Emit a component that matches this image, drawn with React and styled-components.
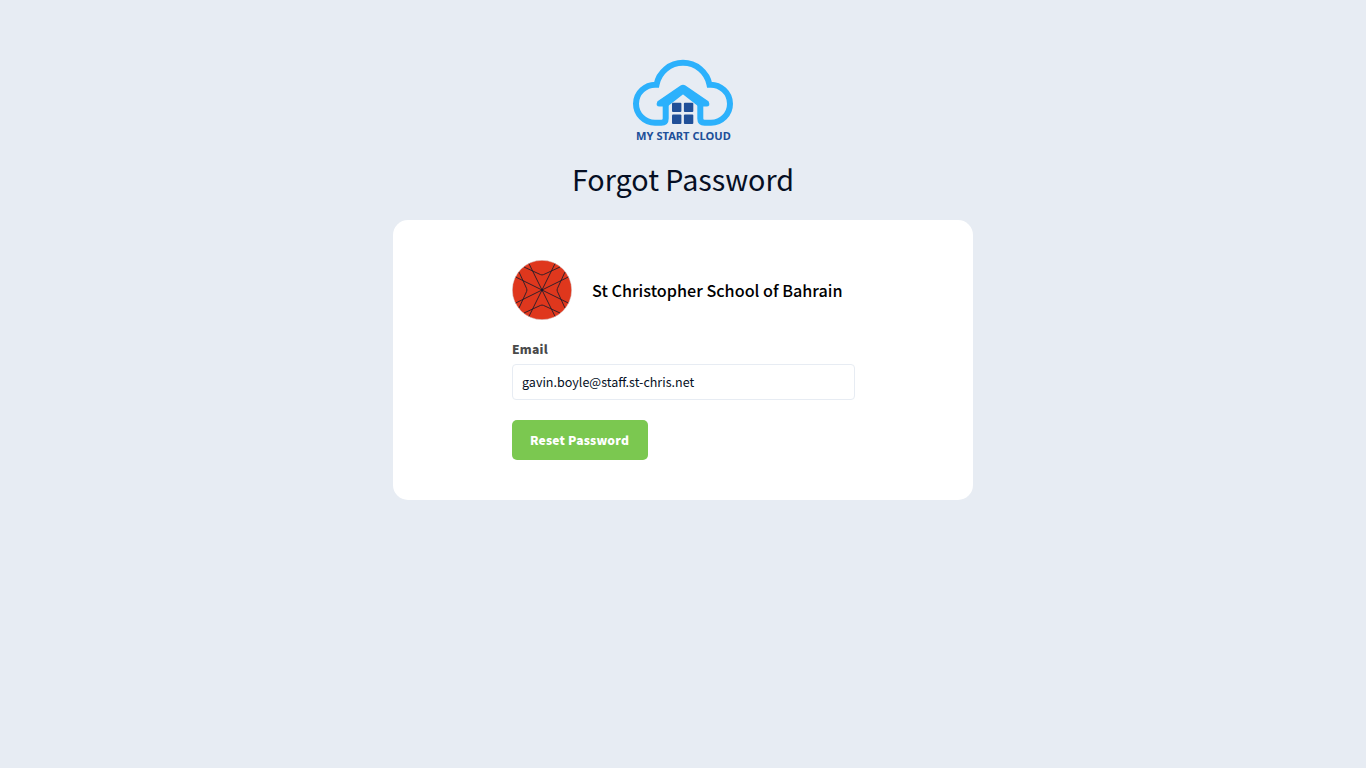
import React from 'react';
import styled, { createGlobalStyle } from 'styled-components';

const GlobalStyle = createGlobalStyle`
  *, *::before, *::after { box-sizing: border-box; }
  body {
    margin: 0;
    background: #e7ecf3;
    color: #050f24;
    font-family: "Noto Sans CJK SC", "Noto Sans", sans-serif;
  }
`;

const Page = styled.main`
  min-height: 100vh;
  padding-top: 60px;
  display: flex;
  flex-direction: column;
  align-items: center;
`;

const BrandLogo = styled.svg`
  display: block;
  width: 100px;
  height: 81px;
  overflow: visible;
`;

const Title = styled.h1`
  margin: 13px 0 16px;
  font-size: 28.7px;
  font-weight: 400;
  line-height: 50px;
  white-space: nowrap;
`;

const Card = styled.section`
  width: 580px;
  height: 280px;
  padding: 40px 118px 40px 119px;
  border-radius: 15px;
  background: #fff;
`;

const School = styled.header`
  display: flex;
  align-items: center;
  gap: 20px;
  height: 60px;
`;

const SchoolLogo = styled.svg`
  width: 60px;
  height: 60px;
  flex: none;
`;

const SchoolName = styled.h2`
  margin: 0;
  font-size: 16.2px;
  font-weight: 500;
  line-height: 24px;
  color: #000;
  white-space: nowrap;
`;

const Form = styled.form`
  display: flex;
  flex-direction: column;
  align-items: flex-start;
`;

const Label = styled.label`
  margin-top: 19px;
  font-size: 12.1px;
  letter-spacing: 0.24px;
  font-weight: 900;
  line-height: 20px;
  color: #4a4a4a;
`;

const EmailInput = styled.input`
  width: 343px;
  height: 36px;
  margin-top: 5px;
  padding: 0 9px 2px;
  border: 1px solid #e7ecf3;
  border-radius: 4px;
  background: #fff;
  color: #050f24;
  font: 400 12.54px "Noto Sans CJK SC", "Noto Sans", sans-serif;
  outline: none;
`;

const Button = styled.button`
  width: 136px;
  height: 40px;
  margin-top: 20px;
  padding: 0 1px 1px 0;
  border: 0;
  border-radius: 5px;
  background: #7bc850;
  color: #fff;
  font: 900 12.1px "Noto Sans CJK SC", "Noto Sans", sans-serif;
  letter-spacing: 0.2px;
`;

export default function App() {
  return (
    <Page>
      <GlobalStyle />
      <BrandLogo viewBox="0 0 100 81" role="img" aria-label="My Start Cloud">
        <path
          d="M32.7 44V58.5Q32.7 62.8 28.4 62.8H22A19.1 19.1 0 0 1 3 43.7A19.4 19.1 0 0 1 23.5 24.7A27 27 0 0 1 76.5 24.7A19.4 19.1 0 0 1 97 43.7A19.1 19.1 0 0 1 78 62.8H71.6Q67.3 62.8 67.3 58.5V44"
          fill="none" stroke="#2cb1fc" strokeWidth="6"
        />
        <path
          d="M25 42L48 26.1Q50 24.8 52 26.1L75 42Q76.7 45.8 73.5 45.8H66L50 33.3L34 45.8H26.5Q23.3 45.8 25 42Z"
          fill="#2cb1fc" stroke="#2cb1fc" strokeWidth="1.6" strokeLinejoin="round"
        />
        <g fill="#204f98">
          <rect x="39" y="42.7" width="9.4" height="9.4" rx="1" />
          <rect x="50.9" y="42.7" width="9.4" height="9.4" rx="1" />
          <rect x="39" y="54.6" width="9.4" height="9.4" rx="1" />
          <rect x="50.9" y="54.6" width="9.4" height="9.4" rx="1" />
          <text x="3.1" y="80" fontFamily="Noto Sans, sans-serif" fontWeight="700" fontSize="11.2" textLength="94.7" lengthAdjust="spacingAndGlyphs">MY START CLOUD</text>
        </g>
      </BrandLogo>
      <Title>Forgot Password</Title>
      <Card>
        <School>
          <SchoolLogo viewBox="0 0 60 60" aria-hidden="true">
            <circle cx="30" cy="30" r="29.7" fill="#df371d" stroke="#d8dde0" strokeWidth="0.5" />
            <path
              d="M17 3.7L43 56.3M43 3.7L17 56.3M3.7 17L56.3 43M56.3 17L3.7 43M12 7L28.5 14.6Q30 15.3 31.5 14.6L48 7M12 53L28.5 45.4Q30 44.7 31.5 45.4L48 53M7 12L14.6 28.5Q15.3 30 14.6 31.5L7 48M53 12L45.4 28.5Q44.7 30 45.4 31.5L53 48"
              fill="none" stroke="#241d29" strokeWidth="0.9"
            />
            <circle cx="30" cy="30" r="1.2" fill="#101a30" />
          </SchoolLogo>
          <SchoolName>St Christopher School of Bahrain</SchoolName>
        </School>
        <Form onSubmit={(event) => event.preventDefault()}>
          <Label htmlFor="email">Email</Label>
          <EmailInput id="email" type="email" defaultValue="gavin.boyle@staff.st-chris.net" />
          <Button type="submit">Reset Password</Button>
        </Form>
      </Card>
    </Page>
  );
}
